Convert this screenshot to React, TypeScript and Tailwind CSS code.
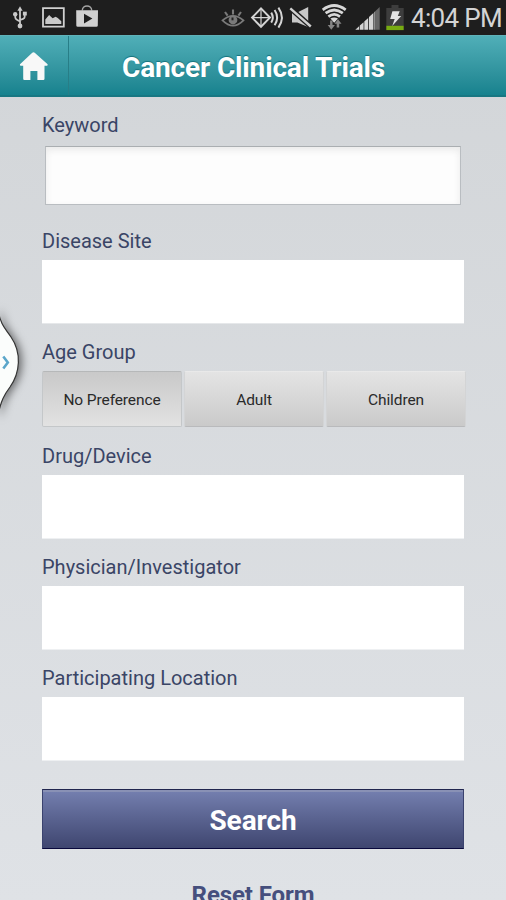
import { useState } from "react";
import type { ReactNode } from "react";
import clsx from "clsx";

const ageGroups = ["No Preference", "Adult", "Children"];

const StatusBar = () => {
  return (
    <div className="flex h-[35px] bg-[#1e1e1e]">
      {/* USB */}
      <svg width="40" height="35" viewBox="0 0 40 35" fill="none" stroke="#c9c9c9" strokeWidth="1.8">
        <path d="M20 9v17M15.3 15v2.5q0 1.6 1.6 2.2L20 21.5M24.7 14v2.7q0 1.6-1.6 2.2L20 20" />
        <path d="M20 6.2l2.6 4.6h-5.2z" fill="#c9c9c9" stroke="none" />
        <circle cx="20" cy="26" r="2.4" fill="#c9c9c9" stroke="none" />
        <circle cx="15.2" cy="14.3" r="2.2" fill="#c9c9c9" stroke="none" />
        <path d="M22.9 11.7h3.9v3.8h-3.9z" fill="#c9c9c9" stroke="none" />
      </svg>
      {/* Picture */}
      <svg width="32" height="35" viewBox="40 0 32 35">
        <path d="M43 8.2h20.8v18.5H43z" fill="none" stroke="#d0d0d0" strokeWidth="1.8" />
        <path d="M45.3 24v-4.5l3.8-4.4 3.5 3.2 3-1.5 2.2 1.3 3.5 3.2V24z" fill="#c9c9c9" />
      </svg>
      {/* Play store bag */}
      <svg width="32" height="35" viewBox="72 0 32 35">
        <path d="M82.3 10.5c0-6 9.4-6 9.4 0" fill="none" stroke="#a5a5a5" strokeWidth="1.4" />
        <path
          d="M76.2 10.2h21.8l-.2 15.3q-.1 1.3-1.4 1.3H77.7q-1.3 0-1.4-1.3zM84 13.8v9.6l8.4-4.8z"
          fill="#d0d0d0"
          fillRule="evenodd"
        />
      </svg>
      <div className="flex-1" />
      {/* Smart stay eye */}
      <svg width="28" height="35" viewBox="220 0 28 35" fill="none" stroke="#7a7a7a">
        <path d="M222.5 20.3q10.5-9 21 0-10.5 10.5-21 0z" strokeWidth="1.7" />
        <circle cx="233" cy="20" r="4.4" fill="#7a7a7a" stroke="none" />
        <path d="M232.5 17.5v2.8" stroke="#222" strokeWidth="2" />
        <path d="M233 9.6v5M225 12l2.6 3.6M241 12l-2.6 3.6" strokeWidth="2.1" />
      </svg>
      {/* NFC */}
      <svg width="39" height="35" viewBox="248 0 39 35" fill="none" stroke="#d4d4d4" strokeWidth="2">
        <path d="M261 8.4l8.9 9.2-8.9 9.2-8.9-9.2z" />
        <path d="M261 8v19M252 17.6h18" strokeWidth="1.2" />
        <path d="M271.2 12.6q3.2 5 0 10M274.6 10q5 7.6 0 15.2M278.4 7.6q7 10 0 20" strokeWidth="2" />
      </svg>
      {/* Muted speaker */}
      <svg width="31" height="35" viewBox="287 0 31 35">
        <path d="M292 12.6h5.3L308.2 7v20L297.3 22.6H292z" fill="#c8c8c8" />
        <path d="M289.5 7.5l22 19.6" stroke="#1e1e1e" strokeWidth="5.2" />
        <path d="M290.3 8.3l20.5 18.2" stroke="#d0d0d0" strokeWidth="2.4" />
      </svg>
      {/* Wifi */}
      <svg width="36" height="35" viewBox="318 0 36 35" fill="none">
        <path
          d="M322.7 9.8q11.5-8.6 23 0M325.6 13.2q8.6-6.4 17.2 0M328.4 16.6q5.8-4.4 11.6 0"
          stroke="#d8d8d8"
          strokeWidth="2.7"
        />
        <path d="M330.4 18.6q3.8-2.4 7.6 0l-3.8 4.2z" fill="#d8d8d8" />
        <path d="M330.1 20.5v4.5h-2.4l3.6 4.8 3.6-4.8h-2.4v-4.5z" fill="#858585" />
        <path d="M336.7 27.6v-3.8h-2.2l3.5-4.6 3.5 4.6h-2.3v3.8z" fill="#858585" />
      </svg>
      {/* Signal */}
      <svg width="30" height="35" viewBox="354 0 30 35">
        <path
          d="M355.3 29.8l3.8-3.5v3.5zM359.8 25.6l3.8-3.4v7.6h-3.8zM364.3 21.5l3.9-3.6v11.9h-3.9zM369 17.1l4.4-4.1v16.8H369z"
          fill="#d4d4d4"
        />
        <path d="M374.2 12.2l1.3-1.3v18.9h-1.3z" fill="#aaa" />
        <path d="M375.5 10.9l4.2-4v22.9h-4.2z" fill="#666" />
      </svg>
      {/* Battery */}
      <svg width="27" height="35" viewBox="384 0 27 35">
        <path d="M391.5 5h7v3h5.2v18h-17.4V8h5.2z" fill="#3d3d3d" />
        <path d="M386.3 25.8h17.4v4.3h-17.4z" fill="#78ab12" />
        <path d="M392.4 11.3h7.3L397.8 16h3.4l-9 10 2.5-7h-4.5z" fill="#e2e2e2" />
      </svg>
      <div className="w-[95px] text-[26px] leading-[36px] tracking-[-0.65px] whitespace-nowrap text-[#d4d4d4]">
        4:04 PM
      </div>
    </div>
  );
};

const Header = () => {
  return (
    <header className="flex h-[62px] border-t border-b-2 border-t-[#60b3ba] border-b-[#187782] bg-linear-to-b from-[#50afb8] to-[#16828e]">
      <button className="h-full w-[69px] border-r border-[#287e87]">
        <svg width="68" height="59" viewBox="0 36 68 59">
          <path
            d="M33.5 52.2q.8 0 1.5.7l12.6 11.4q.5 1.2-.7 1.4h-2.4v13q0 1.2-1.2 1.2h-5.9v-8.8h-7v8.8h-6q-1.2 0-1.2-1.2v-13h-2.5q-1.2-.2-.7-1.4L32 52.9q.7-.7 1.5-.7z"
            fill="#f8f8f8"
          />
        </svg>
      </button>
      <h1 className="flex-1 pr-[68px] text-center text-[28px] leading-[63px] font-bold tracking-[-0.15px] whitespace-nowrap text-white [text-shadow:0_-1px_1px_#16717b]">
        Cancer Clinical Trials
      </h1>
    </header>
  );
};

const Label = ({ children }: { children: ReactNode }) => {
  return <label className="block h-6 text-[20px] leading-6 text-[#3a4566]">{children}</label>;
};

const SelectField = ({ label }: { label: string }) => {
  return (
    <div className="mt-[17px]">
      <Label>{label}</Label>
      <div className="mt-[7px] h-[63px] bg-white shadow-[0_1px_0_#eef0f2]" />
    </div>
  );
};

const App = () => {
  const [ageGroup, setAgeGroup] = useState("No Preference");

  return (
    <div className="relative h-[900px] w-[506px] overflow-hidden bg-linear-to-b from-[#d2d5d8] to-[#dfe2e6] font-['Roboto',sans-serif]">
      <StatusBar />
      <Header />

      <main className="px-[42px] pt-4">
        <Label>Keyword</Label>
        <input
          className="mx-[3px] mt-[9px] block h-[59px] w-[416px] border border-[#b9bdc1] border-t-[#aaaeb1] bg-[#fdfdfd] px-3 shadow-[inset_0_3px_7px_#e9e9e9] outline-none"
          type="text"
        />

        <div className="mt-6">
          <Label>Disease Site</Label>
          <div className="mt-[7px] h-[63px] bg-white shadow-[0_1px_0_#e6e8ea]" />
        </div>

        {/* Age group */}
        <div className="mt-[17px]">
          <Label>Age Group</Label>
          <div className="mt-[7px] -mr-[2px] flex gap-[2px]">
            {ageGroups.map((item) => (
              <button
                key={item}
                className={clsx(
                  "h-14 flex-1 rounded-[2px] border pt-[3px] text-[15.5px] tracking-[-0.1px] text-[#2a2a2a]",
                  ageGroup === item
                    ? "border-[#c4c7c9] border-t-[#b6b8b9] bg-linear-to-b from-[#c9c9c9] to-[#e2e2e2]"
                    : "border-[#d3d4d5] border-t-[#e9e9e9] border-b-[#b9babc] bg-linear-to-b from-[#e4e4e4] to-[#cacaca]",
                )}
                onClick={() => setAgeGroup(item)}
              >
                {item}
              </button>
            ))}
          </div>
        </div>

        <SelectField label="Drug/Device" />
        <SelectField label="Physician/Investigator" />
        <SelectField label="Participating Location" />

        <button className="mt-[29px] h-[60px] w-full border border-t-[#21264f] border-r-[#3a426e] border-b-[#08083c] border-l-[#3a426e] bg-linear-to-b from-[#7580b0] to-[#3f4670] pt-[3px] text-[28px] font-bold tracking-[-0.1px] text-white shadow-[inset_0_2px_0_#8991b5]">
          Search
        </button>
        <button className="mt-[29px] block w-full text-center text-[24px] leading-[34px] font-bold tracking-[-0.1px] text-[#454f7d]">
          Reset Form
        </button>
      </main>

      {/* Side drawer handle */}
      <svg className="absolute top-[300px] left-0" width="36" height="130" viewBox="0 300 36 130">
        <path
          d="M-2 310C1 326 5 328 11 337C22 353 20 373 10 387C4 395 1 401-2 415z"
          fill="#fbfdfc"
          stroke="#333"
          strokeWidth="1.2"
          className="drop-shadow-[3px_1px_4px_rgba(0,0,0,0.5)]"
        />
        <path d="M3.3 356.5l4.5 6-4.5 6" fill="none" stroke="#5ba6ca" strokeWidth="2.6" />
      </svg>
    </div>
  );
};

export default App;
